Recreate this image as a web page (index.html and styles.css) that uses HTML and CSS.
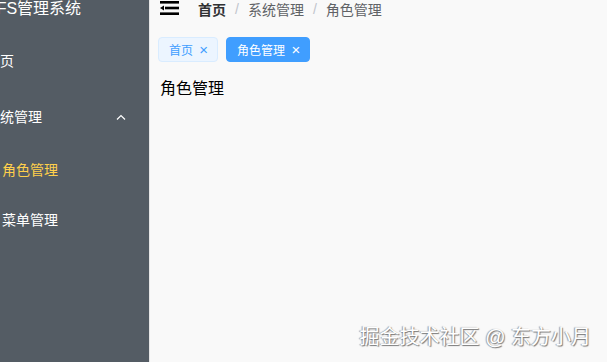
FILE: index.html
```html
<!DOCTYPE html>
<html lang="zh">
<head>
    <meta charset="utf-8">
    <title>角色管理</title>
    <link rel="stylesheet" href="styles.css">
</head>
<body>
<div class="layout">
    <aside class="sidebar">
        <div class="sidebar-inner">
            <div class="logo">XFS管理系统</div>
            <ul class="menu">
                <li class="menu-item">首页</li>
                <li class="submenu-title">
                    <span>系统管理</span>
                    <svg class="arrow" width="10" height="6" viewBox="0 0 10 6"><path d="M1 5.5 L5 1.5 L9 5.5" fill="none" stroke="#fff" stroke-width="1.2"/></svg>
                </li>
                <li class="submenu-item active">角色管理</li>
                <li class="submenu-item">菜单管理</li>
            </ul>
        </div>
    </aside>

    <main class="main">
        <div class="navbar">
            <svg class="fold" width="19" height="14" viewBox="0 0 19 14">
                <rect x="0" y="0" width="19" height="2.6" fill="#000"/>
                <rect x="5" y="5.7" width="14" height="2.6" fill="#000"/>
                <path d="M0 7 L4 4.6 L4 9.4 Z" fill="#000"/>
                <rect x="0" y="11.4" width="19" height="2.6" fill="#000"/>
            </svg>
            <div class="breadcrumb">
                <span class="crumb first">首页</span>
                <span class="sep">/</span>
                <span class="crumb">系统管理</span>
                <span class="sep">/</span>
                <span class="crumb">角色管理</span>
            </div>
        </div>

        <div class="tags">
            <span class="tag">首页 <span class="close">×</span></span>
            <span class="tag tag-active">角色管理 <span class="close">×</span></span>
        </div>

        <div class="content">角色管理</div>
    </main>
</div>
<div class="watermark">掘金技术社区 @ 东方小月</div>
</body>
</html>
```

FILE: styles.css
```css
html, body {
    margin: 0;
    height: 100%;
    font-family: "Liberation Sans", "Noto Sans CJK SC", sans-serif;
}
.layout {
    display: flex;
    height: 100%;
}
.sidebar {
    width: 149px;
    flex-shrink: 0;
    background: #545c64;
    overflow: hidden;
    border-right: 1px solid #e6e6e6;
}
.sidebar-inner {
    margin-left: -34px;
}
.logo {
    height: 33px;
    line-height: 17px;
    padding-left: 20px;
    color: #fff;
    font-size: 16px;
    white-space: nowrap;
}
.menu {
    list-style: none;
    margin: 0;
    padding: 0;
    color: #fff;
    font-size: 14px;
}
.menu-item, .submenu-title {
    height: 56px;
    line-height: 56px;
    padding-left: 20px;
}
.submenu-title {
    display: flex;
    align-items: center;
    justify-content: space-between;
    padding-right: 23px;
}
.submenu-item {
    height: 50px;
    line-height: 50px;
    padding-left: 36px;
}
.submenu-item.active {
    color: #ffd04b;
}
.main {
    flex: 1;
    background: #f9f9f9;
    padding: 0 10px 0 8px;
}
.navbar {
    display: flex;
    align-items: center;
    height: 18px;
    padding-left: 2px;
}
.fold {
    margin-right: 19px;
    margin-top: -2px;
}
.breadcrumb {
    font-size: 14px;
    color: #606266;
    display: flex;
    align-items: center;
}
.crumb.first {
    font-weight: bold;
    color: #303133;
}
.sep {
    color: #c0c4cc;
    margin: 0 9px;
}
.tags {
    display: flex;
    gap: 8px;
    margin-top: 19px;
}
.tag {
    height: 23px;
    line-height: 23px;
    padding: 0 9px 0 10px;
    font-size: 12px;
    color: #409eff;
    background: #ecf5ff;
    border: 1px solid #d9ecff;
    border-radius: 4px;
}
.tag .close {
    margin-left: 3px;
    font-size: 15px;
}
.tag-active {
    background: #409eff;
    border-color: #409eff;
    color: #fff;
}
.content {
    margin-top: 13px;
    padding-left: 2px;
    font-size: 16px;
    color: #000;
}
.watermark {
    position: absolute;
    right: 16px;
    bottom: 12px;
    font-size: 20px;
    color: #fff;
    text-shadow: 1px 1px 1px #777, -1px 0 1px #999;
}
```
